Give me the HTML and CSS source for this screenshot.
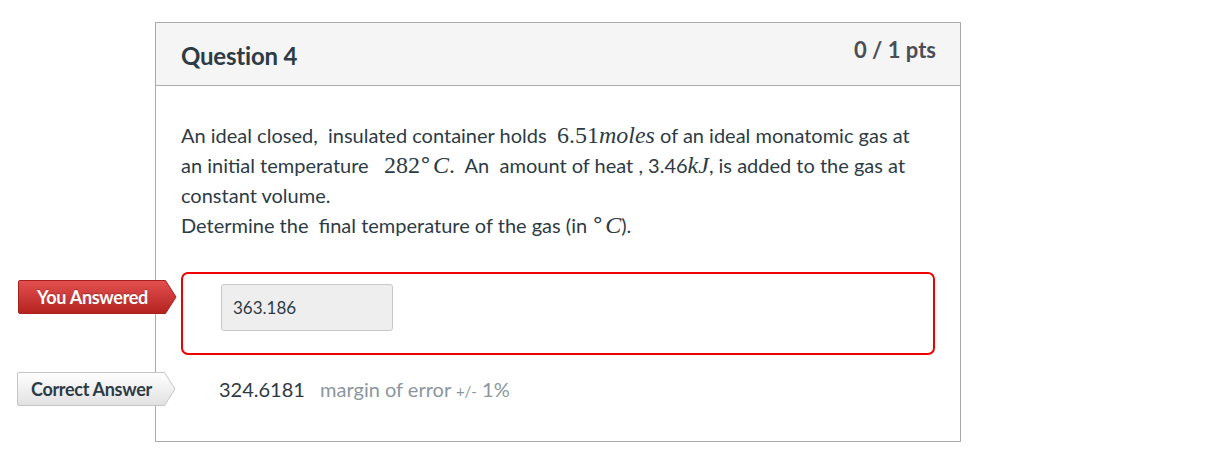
FILE: index.html
```html
<!DOCTYPE html>
<html>
<head>
<meta charset="utf-8">
<link rel="stylesheet" href="styles.css">
</head>
<body>
<div class="card">
  <div class="card-header">
    <h2 class="q-title">Question 4</h2>
    <div class="pts">0 / 1 pts</div>
  </div>
  <div class="card-body">
    <div class="q-text">
      <div class="line">An ideal closed,&nbsp; insulated container holds&nbsp; <span class="m">6.51<i>moles</i></span> of an ideal monatomic gas at</div>
      <div class="line">an initial temperature &nbsp; <span class="m">282<span class="deg">°</span><i>C</i>.</span>&nbsp; An&nbsp; amount of heat , 3.46<span class="m"><i>kJ</i></span>, is added to the gas at</div>
      <div class="line">constant volume.</div>
      <div class="line">Determine the&nbsp; final temperature of the gas (in <span class="m"><span class="deg">°</span><i>C</i></span>).</div>
    </div>

    <div class="answer-row">
      <div class="tag tag-wrong">
        <svg class="tag-bg" width="159" height="34" viewBox="0 0 159 34">
          <defs>
            <linearGradient id="gr" x1="0" y1="0" x2="0" y2="1">
              <stop offset="0" stop-color="#e2504f"/>
              <stop offset="1" stop-color="#b52321"/>
            </linearGradient>
          </defs>
          <path d="M2 0.5 H147.5 L158 17 L147.5 33.5 H2 Q0.5 33.5 0.5 32 V2 Q0.5 0.5 2 0.5 Z" fill="url(#gr)" stroke="#a91f1d" stroke-width="1"/>
        </svg>
        <span class="tag-text">You Answered</span>
      </div>
      <div class="answer-box">
        <div class="answer-input">363.186</div>
      </div>
    </div>

    <div class="correct-row">
      <div class="tag tag-correct">
        <svg class="tag-bg" width="159" height="34" viewBox="0 0 159 34">
          <defs>
            <linearGradient id="gg" x1="0" y1="0" x2="0" y2="1">
              <stop offset="0" stop-color="#ffffff"/>
              <stop offset="1" stop-color="#e1e1e1"/>
            </linearGradient>
          </defs>
          <path d="M2 0.5 H147.5 L158 17 L147.5 33.5 H2 Q0.5 33.5 0.5 32 V2 Q0.5 0.5 2 0.5 Z" fill="url(#gg)" stroke="#c4c4c4" stroke-width="1"/>
        </svg>
        <span class="tag-text">Correct Answer</span>
      </div>
      <span class="correct-val">324.6181</span>
      <span class="margin">margin of error <span class="pm">+/-</span> 1%</span>
    </div>
  </div>
</div>
</body>
</html>
```

FILE: styles.css
```css
html, body {
  margin: 0;
  padding: 0;
  background: #ffffff;
}
body {
  font-family: Lato, "Noto Sans", sans-serif;
  color: #2d3b45;
}
.card {
  margin: 22px 0 0 155px;
  width: 804px;
  border: 1px solid #aaaaaa;
  height: 418px;
}
.card-header {
  background: #f5f5f5;
  border-bottom: 1px solid #aaaaaa;
  height: 62px;
  display: flex;
  justify-content: space-between;
  padding: 0 24px 0 25px;
}
.q-title {
  margin: 0;
  font-size: 24px;
  font-weight: 700;
  line-height: 24px;
  padding-top: 21px;
  letter-spacing: -0.2px;
}
.pts {
  font-size: 22px;
  font-weight: 700;
  color: #4a4f55;
  padding-top: 15px;
  line-height: 24px;
}
.card-body {
  padding: 34px 25px 0 25px;
}
.q-text {
  font-size: 20px;
  line-height: 30px;
}
.line {
  white-space: nowrap;
  height: 30px;
}
.m {
  font-family: "Liberation Serif", "DejaVu Serif", serif;
  font-size: 24px;
}
.m i {
  font-style: italic;
}
.deg {
  font-family: "DejaVu Sans", sans-serif;
  font-size: 22px;
  line-height: 0;
  margin-right: 2px;
}
.answer-row {
  position: relative;
  margin-top: 32px;
}
.answer-box {
  border: 2px solid #ee0000;
  border-radius: 7px;
  height: 83px;
  width: 754px;
  padding: 10px 0 0 38px;
  box-sizing: border-box;
}
.answer-input {
  width: 172px;
  height: 47px;
  box-sizing: border-box;
  background: #eeeeee;
  border: 1px solid #c8c8c8;
  border-radius: 3px;
  font-size: 17px;
  line-height: 45px;
  padding-left: 11px;
  color: #2d3b45;
}
.tag {
  position: absolute;
  width: 159px;
  height: 34px;
}
.tag-bg {
  position: absolute;
  left: 0;
  top: 0;
  display: block;
}
.tag-text {
  position: relative;
  display: block;
  font-size: 18px;
  font-weight: 700;
  line-height: 34px;
  letter-spacing: -0.3px;
}
.tag-wrong {
  top: 8px;
  left: -163px;
}
.tag-wrong .tag-text {
  color: #ffffff;
  padding-left: 19px;
  text-shadow: 0 -1px 0 rgba(0,0,0,0.25);
}
.tag-correct {
  top: 0;
  left: -164px;
}
.tag-correct .tag-text {
  color: #2d3b45;
  padding-left: 14px;
}
.correct-row {
  position: relative;
  margin-top: 17px;
  height: 34px;
  line-height: 34px;
  padding-left: 38px;
  font-size: 20px;
}
.correct-val {
  color: #2d3b45;
  margin-right: 10px;
}
.margin {
  color: #8b969e;
}
.pm {
  font-size: 15px;
}
```
